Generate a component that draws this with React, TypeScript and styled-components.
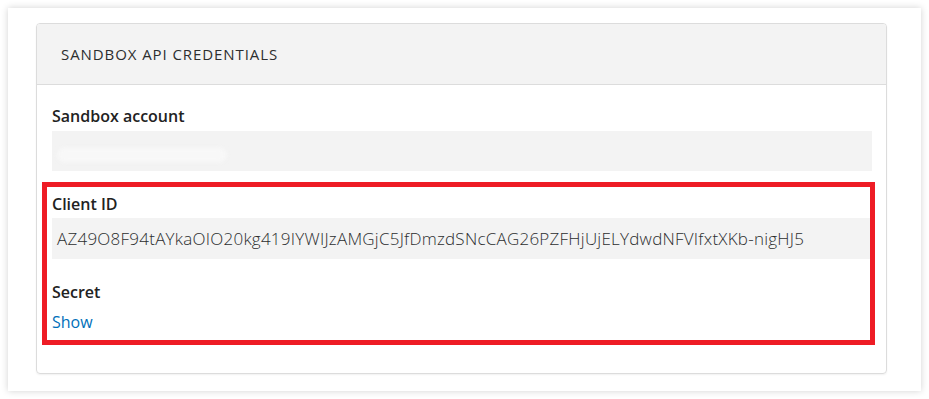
import React from "react";
import styled, { createGlobalStyle } from "styled-components";

const Global = createGlobalStyle`
  html, body { margin: 0; padding: 0; background: #ffffff; }
  body { font-family: "Open Sans", "Liberation Sans", sans-serif; color: #2c2e2f; }
`;

const Page = styled.div`
  padding: 8px 8px 7px 8px;
  width: 913px;
`;

const Panel = styled.div`
  background: #ffffff;
  box-shadow: 0 0 7px rgba(0, 0, 0, 0.18);
  padding: 15px 34px 17px 28px;
`;

const Card = styled.div`
  position: relative;
  border: 1px solid #dcdcdc;
  border-radius: 4px;
  box-shadow: 0 1px 2px rgba(0, 0, 0, 0.06);
  overflow: hidden;
`;

const Header = styled.div`
  height: 60px;
  background: #f3f3f3;
  border-bottom: 1px solid #dcdcdc;
  display: flex;
  align-items: center;
  padding-left: 24px;
  font-size: 15px;
  letter-spacing: 0.92px;
  color: #2c2e2f;
`;

const Body = styled.div`
  padding: 20px 14px 40px 15px;
  display: flex;
  flex-direction: column;
`;

const Label = styled.div<{ $top?: number }>`
  font-size: 16px;
  font-weight: 600;
  line-height: 22px;
  color: #222222;
  margin-top: ${(p) => p.$top ?? 0}px;
`;

const Field = styled.div<{ $h: number; $gap: number }>`
  height: ${(p) => p.$h}px;
  background: #f3f3f3;
  margin-top: ${(p) => p.$gap}px;
  display: flex;
  align-items: center;
  padding-left: 5px;
  font-size: 17px;
  font-weight: 300;
  letter-spacing: 0.24px;
  color: #2c2e2f;
  white-space: nowrap;
`;

const Blurred = styled.div`
  width: 170px;
  height: 14px;
  border-radius: 7px;
  background: #f8f8f8;
  filter: blur(2px);
  margin-top: 8px;
`;

const Link = styled.a`
  font-size: 16px;
  line-height: 22px;
  color: #0070ba;
  text-decoration: none;
  margin-top: 8px;
  cursor: pointer;
`;

const Highlight = styled.div`
  position: absolute;
  left: 5px;
  top: 158px;
  width: 823px;
  height: 153px;
  border: 5px solid #ee1c25;
  pointer-events: none;
`;

export default function App() {
  return (
    <>
      <Global />
      <Page>
        <Panel>
          <Card>
            <Header>SANDBOX API CREDENTIALS</Header>
            <Body>
              <Label>Sandbox account</Label>
              <Field $h={40} $gap={4}>
                <Blurred />
              </Field>
              <Label $top={22}>Client ID</Label>
              <Field $h={41} $gap={3}>
                AZ49O8F94tAYkaOIO20kg419IYWIJzAMGjC5JfDmzdSNcCAG26PZFHjUjELYdwdNFVIfxtXKb-nigHJ5
              </Field>
              <Label $top={22}>Secret</Label>
              <Link>Show</Link>
            </Body>
            <Highlight />
          </Card>
        </Panel>
      </Page>
    </>
  );
}
